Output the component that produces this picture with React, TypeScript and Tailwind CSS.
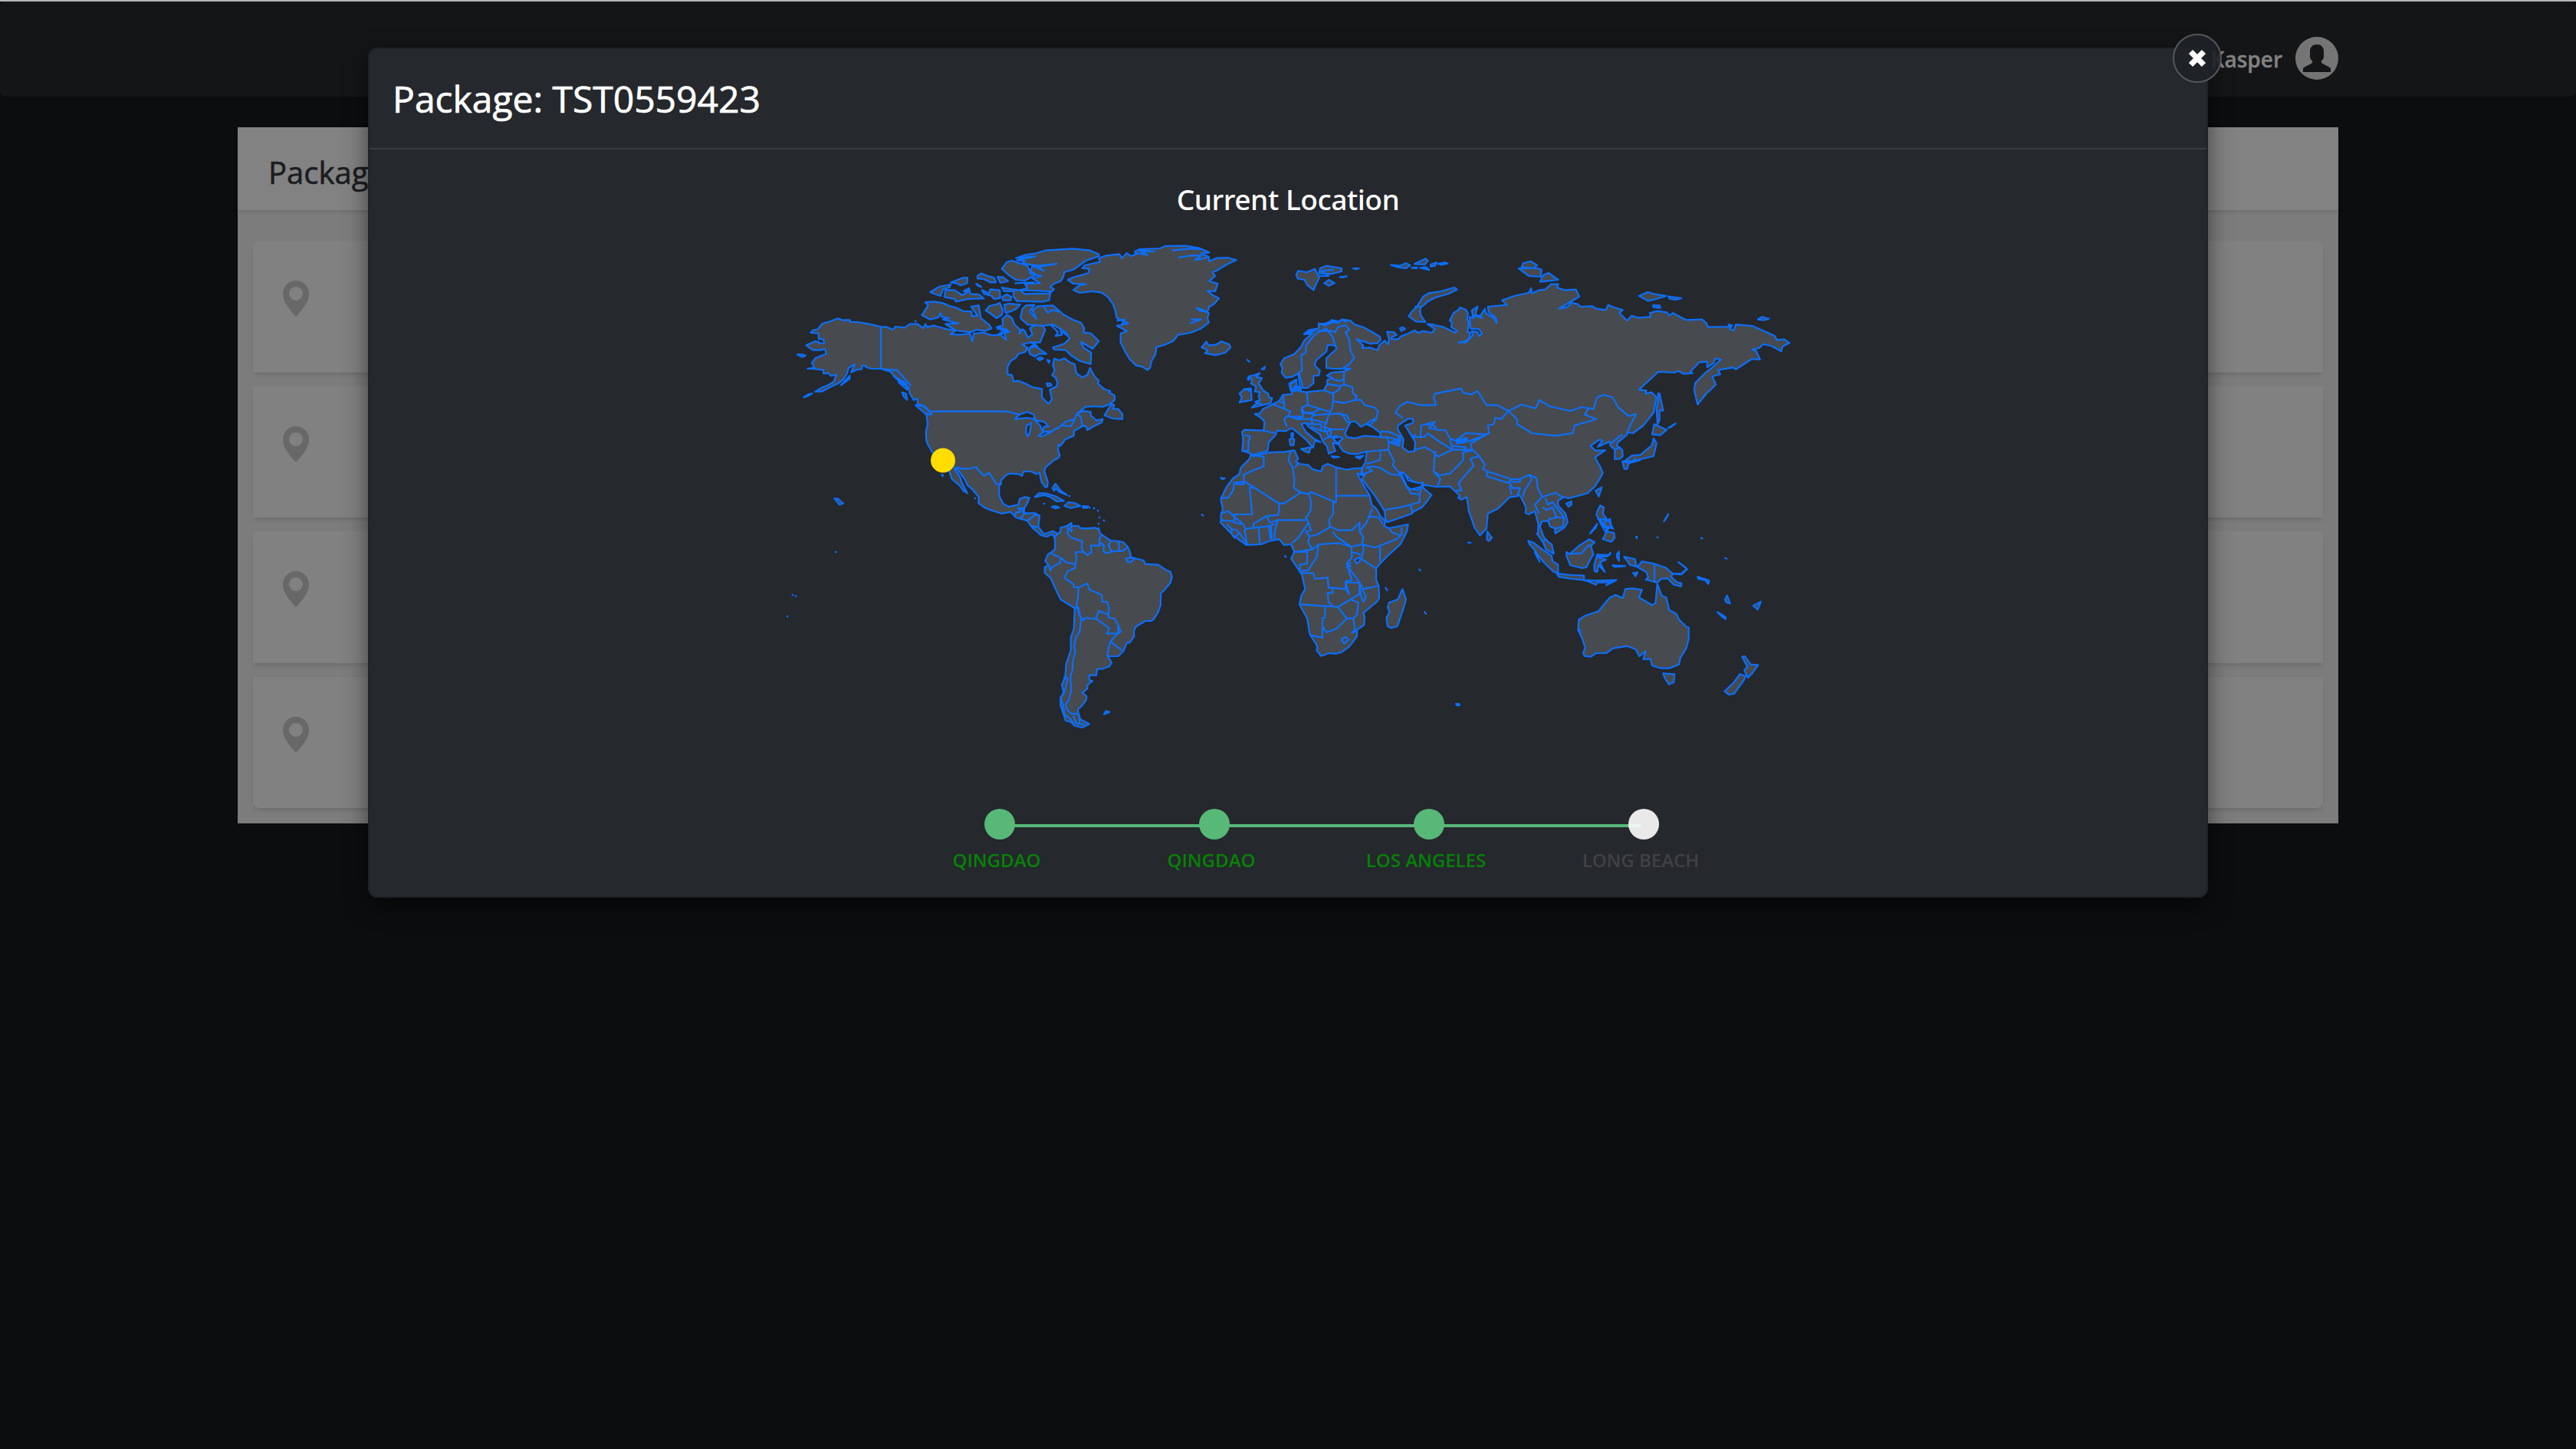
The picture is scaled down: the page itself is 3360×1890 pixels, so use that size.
import React from "react";

/* ---------- World map ---------- */

// Each section of the map is digitised on its own local grid: [originX, originY, unitsPerX, unitsPerY].
type Grid = [number, number, number, number];
const NA: Grid = [1000, 300, 3, 3];
const AT: Grid = [1300, 300, 3, 3];
const SA: Grid = [1300, 620, 3, 3];
const EU: Grid = [1560, 380, 3, 3];
const AS: Grid = [1780, 300, 2.6133, 3];
const OC: Grid = [2000, 520, 3, 3];

type Piece = [Grid, string];

function points([ox, oy, sx, sy]: Grid, coords: string): string {
  const n = coords.trim().split(/\s+/).map(Number);
  const out: string[] = [];
  for (let i = 0; i + 1 < n.length; i += 2) {
    out.push(`${(ox + n[i] / sx).toFixed(1)} ${(oy + n[i + 1] / sy).toFixed(1)}`);
  }
  return out.join("L");
}

const ring = (...pieces: Piece[]) => "M" + pieces.map(([g, c]) => points(g, c)).join("L") + "Z";
const rings = (g: Grid, list: string[]) => list.map((c) => ring([g, c])).join("");
const lines = (g: Grid, list: string[]) => list.map((c) => "M" + points(g, c)).join("");

const northAmerica = ring([
  NA,
  `447 543 412 543 390 538 388 531 372 532 372 545 355 546 330 557 345 525 320 540 315 560 300 585 280 600 255 612 215 632 190 633 215 617 240 607 262 595 273 566 252 571 240 560 222 562 222 548 180 543 160 543 187 538 176 520 190 502 212 493 233 485 228 464 214 470 180 470 155 451 190 435 203 438 205 443 225 442 222 427 203 427 203 405 172 402 180 393 200 388 218 366 250 357 278 346 298 353 325 352 328 360 355 360 400 368 447 378 470 380 495 390 503 378 540 382 560 368 590 368 612 384 622 368 627 380 655 374 705 388 740 393 720 408 760 410 795 405 805 436 810 405 850 402 880 412 915 410 937 430 930 400 950 398 925 385 900 380 925 372 922 348 942 332 960 345 970 370 990 388 990 405 1000 388 1010 395 1022 422 1040 408 1030 385 1050 372 1080 375 1090 390 1082 410 1070 440 1030 440 1000 448 1022 462 1010 478 985 485 975 500 955 512 943 535 943 565 960 568 967 593 985 590 1010 600 1040 615 1077 622 1077 655 1103 680 1116 662 1108 625 1135 612 1138 595 1130 578 1117 568 1127 550 1120 530 1125 503 1145 510 1165 502 1190 520 1205 525 1212 560 1235 577 1255 567 1265 540 1285 575 1300 590 1295 600 1320 622 1345 630 1340 636 1362 648 1362 665 1345 680 1315 692 1280 690 1248 692 1215 718 1240 708 1268 712 1268 725 1290 745 1315 740 1312 752 1280 768 1255 783 1250 770 1240 765 1202 787 1202 805 1168 820 1150 845 1142 840 1140 860 1147 883 1140 893 1125 900 1090 930 1087 945 1100 985 1098 1005 1090 1006 1075 985 1068 950 1055 955 1035 945 1005 945 1000 962 985 955 950 953 935 960 917 980 917 995 910 1000 910 1040 925 1070 945 1083 985 1075 990 1052 1010 1045 1028 1048 1020 1070 1008 1088 1008 1108 1050 1108 1068 1118 1063 1162 1085 1190 1120 1178 1150 1195 1130 1215 1120 1190 1095 1200 1075 1195 1040 1165 1020 1138 975 1125 955 1103 920 1110 880 1097 850 1085 828 1068 830 1045 805 1015 785 998 775 975 745 935 735 935 755 965 765 990 785 1030 770 1020 755 1000 725 975 715 945 690 920 660 890 645 865 632 842 625 825 623 790 630 760 625 722 645 720 620 690 590 680 590 660 575 665 560 640 555 615 530 600 505 580 485 555`,
]);

const canadianIslands = rings(NA, [
  "607 333 632 295 620 283 655 280 690 286 715 297 745 305 770 318 800 318 805 338 825 335 800 300 830 295 838 345 870 370 880 385 855 395 820 390 800 400 740 393 700 368 750 365 690 350 715 345 685 340 680 325 672 342 640 350",
  "640 243 675 222 720 213 715 225 690 232 680 258 655 250",
  "700 235 735 235 765 255 790 240 770 240 792 228 797 250 830 252 850 268 790 270 740 280 735 270 695 262",
  "722 205 765 188 785 186 785 208 760 217 740 208 720 205",
  "825 180 840 170 865 180 890 187 897 205 875 205 850 192 825 190",
  "820 210 840 223 828 220",
  "842 235 870 248 875 232 912 236 914 266 890 270 880 258 850 250",
  "903 183 925 185 945 200 915 207",
  "857 315 870 298 900 290 912 285 925 315 920 332 900 345 880 330",
  "930 292 950 288 992 292 975 310 950 320 935 325",
  "922 262 940 252 957 262 955 275 925 275",
  "920 152 940 125 960 120 990 130 1020 140 1030 160 1055 175 1010 198 975 195 945 175",
  "975 110 1010 98 1050 92 1090 80 1140 77 1200 73 1265 80 1300 95 1300 102 1250 120 1200 155 1165 165 1160 185 1150 200 1125 210 1110 222 1125 232 1110 245 1105 275 1080 281 980 278 965 260 967 240 930 240 920 225 960 232 990 235 1020 228 1010 210 1070 208 1040 190 1075 180 1030 170 1040 140 1085 160 1060 145 1135 132 1060 140 1000 130 1010 122 980 118 1050 103",
  "993 345 1000 310 1015 295 1048 293 1030 320 1055 348 1040 315 1060 298 1120 295 1140 312 1160 330 1200 352 1230 362 1243 385 1240 400 1270 405 1300 435 1275 465 1230 438 1240 460 1270 480 1268 525 1225 512 1190 490 1170 470 1125 468 1120 460 1165 445 1185 425 1170 400 1120 370 1080 375 1020 370",
  "1025 470 1045 450 1095 485 1065 485 1050 495 1030 485",
  "1058 503 1070 497 1082 503 1068 510",
  "1098 508 1108 512 1104 520",
  "1095 600 1110 600 1115 608 1100 612",
  "1322 725 1350 680 1360 685 1355 700 1375 700 1392 720 1392 740 1355 738",
  "120 487 140 487 152 492 138 497",
  "145 655 165 642 178 640 160 650",
  "290 608 325 570 325 582",
  "530 635 545 640 550 665 535 650",
  "582 685 610 688 640 712 645 722 620 718",
  "265 1050 280 1052 300 1070 285 1075",
  "1050 1045 1065 1030 1090 1030 1130 1042 1163 1060 1135 1062 1110 1045 1085 1038",
  "1115 1083 1130 1080 1145 1086 1130 1090",
  "1165 1080 1180 1065 1205 1068 1228 1080 1190 1088",
  "1237 1080 1258 1082 1255 1087 1237 1087",
  "1118 1010 1130 993 1150 1020 1175 1037 1145 1025 1130 1010 1125 1020",
  "685 957 690 960 688 964",
]);

const greenland = ring([
  AT,
  `278 195 300 185 360 168 362 152 335 150 345 138 405 125 400 110 430 100 480 94 490 110 510 90 525 102 545 95 540 85 560 75 640 72 660 63 740 62 790 70 832 88 800 92 830 105 832 122 860 110 905 108 938 118 900 135 860 160 845 165 855 180 832 200 865 210 855 240 825 238 845 255 870 267 850 290 832 300 825 320 780 305 830 325 825 345 830 362 800 385 760 402 710 410 690 435 655 450 625 458 622 485 605 515 600 540 590 548 570 535 545 530 520 505 505 480 485 440 485 405 510 395 470 375 515 365 470 345 465 320 455 290 435 262 410 245 375 240 325 246 300 235 325 215 350 212 300 210`,
]);

const atlantic = rings(AT, [
  "802 460 820 437 830 452 860 448 880 436 910 448 915 460 895 480 858 490 815 482 825 470 802 458",
  "1172 175 1180 160 1215 165 1245 152 1262 185 1240 235 1215 215 1205 195 1178 190",
  "1262 170 1265 150 1290 140 1350 150 1350 162 1310 172",
  "1282 208 1300 195 1322 208 1300 218",
  "1395 150 1418 150 1405 154",
  "1343 184 1370 181 1355 185",
  "985 575 1030 560 1015 575 1038 580 1025 600 1045 630 1062 640 1065 655 1078 658 1072 678 1030 688 998 695 1015 680 1035 680 1012 672 1030 665 1025 650 1030 635 1010 632 1015 612 995 600 1000 585",
  "950 675 960 655 950 640 970 622 995 620 998 665",
  "980 508 990 516",
  "1037 545 1050 535 1046 545",
  "1145 820 1155 814 1165 820 1162 842 1150 842",
  "1153 795 1160 795 1160 808 1153 808",
  "1192 857 1230 850 1222 872 1210 868",
  "1310 885 1340 888 1320 891",
  "1405 888 1435 883 1420 895",
  "1150 605 1170 588 1175 610 1165 615 1170 630 1150 628",
  "1175 625 1190 615 1190 632",
  "877 970 893 972 885 975",
  "803 1113 808 1118",
]);

const southAmerica = ring([
  SA,
  `230 238 250 220 250 205 275 198 293 186 292 198 320 198 325 206 350 208 385 205 400 212 405 228 445 255 480 258 495 262 512 278 522 300 525 320 575 333 582 347 632 350 665 372 680 377 686 398 680 420 655 450 642 462 642 505 632 535 615 562 605 570 582 570 545 592 537 608 538 630 520 655 510 655 495 690 475 708 435 708 450 733 440 748 415 757 393 758 390 783 362 782 362 800 375 805 355 820 355 835 335 850 352 865 350 880 330 905 318 915 320 935 328 955 362 973 335 987 305 980 290 965 270 960 262 935 250 900 250 870 262 850 255 820 268 790 272 738 290 685 290 635 302 600 305 520 250 485 240 465 210 400 188 382 188 360 203 350 190 335 200 310 228 290 228 245`,
]);

const southIslands = rings(SA, ["420 935 428 922 442 926", "505 325 525 322 540 325 525 340 512 338"]);

const eurasia = ring(
  [
    EU,
    `403 320 375 335 350 338 335 318 338 300 330 285 345 262 385 245 410 218 425 190 455 165 422 168 440 152 480 145 480 125 500 130 530 115 555 125 570 110 605 115 620 130 655 140 690 160 720 178 722 190 710 203 680 205 628 187 655 212 650 222 680 220 710 230 718 210 738 193 752 207 755 190 748 158 775 160 785 170 765 180 765 187 792 187 800 177 830 165 855 153 870 162 890 155 922 162 935 148 905 128 930 130`,
  ],
  [
    AS,
    `235 372 270 380 308 402 315 395 295 380 298 360 290 355 303 325 320 313 325 303 345 312 352 325 350 350 355 365 350 398 360 402 355 425 345 435 320 440 345 440 368 412 365 395 385 400 390 415 400 405 390 388 360 385 358 340 370 345 365 315 385 300 378 330 402 345 370 335 395 335 410 308 412 325 440 345 450 365 448 345 422 320 420 300 485 293 468 275 510 258 560 245 567 228 570 248 595 235 615 233 635 212 660 212 655 225 680 235 720 233 732 260 705 278 662 308 690 302 705 285 727 290 735 300 775 298 790 308 822 313 830 293 850 303 880 313 868 325 895 355 910 335 930 343 975 340 972 325 995 317 1030 322 1038 335 1050 325 1095 352 1150 350 1165 365 1170 380 1245 378 1240 370 1252 373 1245 388 1258 393 1265 370 1320 375 1370 400 1398 415 1405 430 1430 428 1448 442 1425 455 1420 475 1385 453 1358 447 1345 462 1322 468 1335 475 1348 507 1320 505 1265 545 1255 538 1205 548 1212 565 1185 573 1197 605 1165 640 1145 668 1135 683 1123 625 1127 598 1160 560 1185 538 1215 507 1195 503 1190 520 1168 537 1167 515 1140 518 1110 555 1118 560 1087 563 1070 552 1055 558 1000 555 982 575 935 625 960 628 958 640 978 635 995 655 985 715 950 765 915 795 895 792 895 800 862 832 860 845 878 860 880 885 870 895 852 897 853 860 838 845 835 828 795 848 810 825 800 820 770 845 787 863 820 862 785 890 800 920 812 950 803 970 785 1003 760 1030 735 1038 695 1050 680 1045 658 1060 660 1080 685 1110 692 1145 680 1165 650 1187 648 1168 632 1160 625 1138 605 1140 597 1160 612 1205 630 1225`,
  ],
  [OC, "72 570 80 607 50 590 38 562 14 528"],
  [
    AS,
    `590 1190 592 1150 580 1100 560 1112 548 1108 550 1085 535 1050 522 1030 520 1042 495 1045 455 1090 420 1110 415 1170 393 1195 375 1165 355 1100 348 1045 330 1055 318 1048 325 1040 290 1003 245 1005 200 997 165 985 130 948 118 950 125 965 145 1010 180 1018 198 988 200 1010 228 1037 210 1065 195 1085 165 1103`,
  ],
  [
    EU,
    `845 870 750 903 742 895 738 860 700 800 650 735 662 715 650 720 650 690 663 670 668 627 630 637 600 635 575 625 562 605 558 590 575 575 565 570 535 575 530 570 560 600 535 592 545 625 520 635 512 605 498 590 485 560 440 530 430 515 412 520 430 550 460 575 487 590 465 585 458 612 430 580 395 550 375 535 350 547 318 545 310 565 285 590 280 625 250 632 225 640 200 630 180 625 185 585 180 550 190 542 265 545 268 510 255 495 230 480 250 478 260 462 300 442 325 430 340 405 375 402 378 385 368 378 365 360 393 345 390 375 410 380 410 392 430 395 500 387 512 365 515 345 535 340 512 330 530 318 580 313 605 302 545 303 510 300 510 262 550 225 545 212 515 210 510 235 470 270 465 290 485 310 480 330 460 330 460 360 437 378 418 378 410 345`,
  ]
);

const africa = ring([
  EU,
  `215 638 225 645 290 630 345 628 385 622 400 655 390 665 405 675 440 680 455 695 490 705 495 685 515 675 545 688 590 698 615 693 650 692 645 718 630 712 665 775 680 800 688 835 705 850 722 880 742 900 735 918 755 927 830 912 825 940 800 990 750 1035 720 1065 705 1085 705 1130 715 1152 717 1200 708 1215 655 1258 660 1275 658 1305 630 1325 630 1350 600 1390 570 1412 545 1418 520 1416 490 1427 472 1405 475 1390 445 1340 435 1280 405 1225 412 1190 427 1165 415 1110 372 1045 385 1020 372 990 345 993 325 970 285 978 255 990 198 993 145 955 97 905 98 870 105 855 97 812 120 765 145 732 170 715 175 690 210 655`,
]);

const africanIslands = rings(EU, [
  "755 1218 790 1205 808 1165 822 1205 812 1240 788 1310 765 1318 750 1312 745 1278 757 1255 750 1235",
  "1140 940 1158 965 1145 977 1138 970",
  "895 1255 900 1262",
  "742 1160 748 1170",
  "1065 983 1075 984",
  "348 1035 352 1040",
  "873 1088 878 1093",
]);

const arctic = rings(AS, [
  "90 137 120 140 140 130 155 138 140 150 110 145",
  "170 133 208 112 215 120 205 135",
  "188 148 210 145 220 157",
  "225 135 245 127 240 140 225 143",
  "250 132 275 127 283 131 260 136",
  "160 148 178 146 178 150",
  "535 145 540 130 565 122 588 138 575 150",
  "525 150 590 150 603 155 600 183 560 180",
  "598 203 610 175 627 168 660 195 620 200",
  "935 258 965 243 985 250 1028 258 985 273 965 277",
  "1035 260 1080 267 1060 273 1040 270",
  "982 295 1005 295 1008 305 985 303",
  "1340 350 1355 340 1378 347 1360 353",
  "150 338 160 320 178 300 200 260 220 247 260 240 305 225 315 233 285 250 240 265 215 280 190 305 190 330 207 360 175 358",
  "120 385 130 380 138 387 125 395",
  "987 760 1030 782 1008 803 980 800",
  "1035 775 1060 757 1045 770",
  "1000 640 1005 640 1018 707 1005 705 1005 745 998 760 995 700 1000 670",
  "985 815 995 835 985 885 940 897 920 905 885 905 910 883 940 880 965 855 978 845",
  "878 905 900 910 895 935 885 935",
  "787 1020 808 1007 798 1043",
  "687 1070 705 1062 705 1075 695 1083",
  "793 1100 803 1078 815 1085 812 1110 825 1130 800 1135 790 1115",
  "795 1130 830 1135 845 1165 820 1165",
  "768 1188 792 1150 788 1165",
  "812 1210 825 1180 850 1185 852 1205 840 1220",
  "1020 1140 1035 1112 1028 1128",
]);

const oceania = rings(OC, [
  "178 865 205 848 255 832 285 795 300 778 322 768 350 780 360 745 385 742 425 748 413 778 465 808 478 800 485 725 503 772 520 778 532 827 560 842 570 865 600 893 608 895 608 940 598 978 575 1015 570 1040 532 1055 500 1055 465 1045 458 1018 430 1020 440 988 415 1008 400 980 368 968 312 977 285 996 245 996 225 1010 200 1007 195 995 203 975 190 935 175 905",
  "508 1075 552 1078 550 1110 530 1118 515 1095",
  "817 1010 828 1008 850 1040 880 1042 860 1070 840 1092 825 1062 838 1050",
  "748 1145 785 1110 808 1078 830 1085 825 1100 785 1155 765 1158",
  "408 658 425 637 470 645 520 662 545 685 540 698 562 718 580 722 578 735 550 728 525 703 500 705 485 720 440 708 450 700 442 678 405 658 378 650 355 618 398 628 402 650",
  "550 685 580 685 600 665 568 640 595 660 602 667 580 688",
  "-20 556 0 563 35 590 72 615 75 635 97 650 97 682 80 678 45 645 20 615 5 592 -15 570",
  "92 685 150 690 198 692 198 710 150 705 100 697",
  "205 710 240 712 325 710 285 730 305 718 250 720 245 728",
  "130 600 142 608 180 575 218 550 240 562 225 575 235 610 225 625 208 660 190 663 145 652 130 615",
  "238 650 250 610 298 612 302 602 290 617 250 620 285 630 260 640 280 678 255 650 250 678 240 675",
  "327 608 335 598 335 635 327 620",
  "310 652 360 655 318 658",
  "390 682 408 680 400 695",
  "643 697 670 705 688 712 685 725 672 710 645 705",
  "750 785 758 770 770 802 755 797",
  "720 835 752 855 752 863 735 850",
  "860 810 890 795 878 825",
  "5 600 25 638 15 620",
  "402 540 406 541 404 546",
  "656 545 661 547",
  "750 624 757 626",
]);

const water =
  ring([
    EU,
    "583 555 605 510 625 510 645 530 665 520 690 530 722 555 720 570 660 565 620 575 590 570",
  ]) +
  ring([EU, "668 518 695 500 705 500 680 522"]) +
  ring([EU, "790 525 830 498 850 500 848 515 818 525 840 560 858 590 855 625 830 628 808 610 812 580 790 540"]) +
  ring([EU, "802 710 815 712 830 740 870 750 888 748 880 765 840 775 825 762"]) +
  ring([EU, "622 1050 640 1040 642 1055 628 1065"]) +
  ring([NA, "970 740 990 722 1020 712 1045 722 1050 740 1020 735"]) +
  ring([NA, "1017 765 1035 755 1030 790 1022 808 1015 795"]) +
  ring([NA, "1050 745 1085 750 1103 768 1085 770 1080 788 1070 765"]) +
  ring([NA, "1063 805 1085 790 1115 788 1135 775 1110 792 1075 808"]) +
  ring([NA, "990 235 1110 240 1105 248 1010 250"]);

const borders =
  lines(NA, [
    "447 378 447 543",
    "640 710 940 710 970 718 990 722",
    "1050 740 1060 750",
    "1135 780 1170 750 1205 740 1215 718 1230 735 1235 765",
    "1150 765 1190 768 1205 745",
    "735 928 770 935 800 933 820 928 838 950 852 962 870 950 900 995 917 995",
    "972 1120 975 1105 992 1103 988 1088 1010 1090",
    "992 1130 1010 1110",
    "1020 1138 1050 1115 1068 1118",
    "1038 1160 1063 1162",
    "447 543 490 548 510 548 565 610",
    "495 570 545 600 550 625 515 595 535 590",
    "1010 215 1045 205 970 208",
    "900 385 945 400 905 410 940 385",
    "1035 440 1060 455 1030 460 1055 440",
    "1085 300 1100 325 1115 312 1145 320",
    "1110 370 1140 400 1130 415 1155 410 1150 395 1180 415",
  ]) +
  lines(AT, [
    "545 90 590 98 560 80 620 84",
    "685 80 760 73 800 75",
    "710 108 760 100 800 100 775 118 825 108",
    "755 365 800 350 760 350",
    "470 355 500 350 490 370 515 365",
    "790 315 820 320 790 305",
    "1262 180 1300 180 1270 160 1320 155",
  ]) +
  lines(SA, [
    "80 130 100 132 105 150",
    "278 200 278 230 290 243 310 250 335 257 332 285 340 300 310 300 312 330 305 360",
    "293 200 285 212 292 220 297 210",
    "340 300 355 312 372 300 368 275 405 275 400 255 408 235",
    "405 262 420 275 418 298 430 305 450 298",
    "445 257 438 275 450 298 495 295 512 280",
    "477 260 480 295",
    "213 305 245 320 275 342 305 347 308 362 278 375 265 402 300 425 302 438 320 438",
    "250 320 248 342 215 360 210 373 203 350",
    "320 438 355 423 362 447 410 467 413 495 432 495 440 520 437 545 400 530 388 560 440 598 432 620 475 618 475 585 462 562 437 555 437 535",
    "320 438 318 480 312 510 325 550 338 568 345 558 388 562",
    "305 520 318 515 330 560 325 610 310 635 303 670 308 690 297 730 297 760 288 790 292 840 282 880 270 895 275 915 290 932 322 935 325 970",
    "475 618 445 650 432 705",
    "445 650 490 685",
    "475 585 485 612 465 625",
    "262 790 278 795 265 850 250 870 260 900 265 935 290 955 305 980",
    "300 940 310 970 345 975",
  ]) +
  lines(EU, [
    "408 380 400 320 415 310 412 250 430 240 430 215 455 180 480 155 530 155 545 160 555 140 585 132 600 150 585 160 600 190 605 235 620 260 600 285 575 300",
    "545 212 535 180 510 145 480 160",
    "580 313 578 345 560 350 535 345",
    "578 345 580 365 612 375 615 400 630 410 620 425 645 425 660 445 700 455 712 470 705 500",
    "510 362 560 370 580 365",
    "500 387 535 400 560 385 565 370",
    "537 430 580 437 620 425",
    "537 400 537 430 530 465 520 475",
    "435 395 437 445 470 455 520 470",
    "412 455 437 445",
    "412 455 425 475 460 475 485 460",
    "340 405 345 440 345 460 370 470 360 490 395 490 420 490 412 460",
    "300 442 345 460",
    "325 430 350 440",
    "345 500 360 487 395 500 415 490",
    "345 500 355 530",
    "395 500 420 500 450 500 460 480 420 475",
    "450 500 510 515 520 480 460 485",
    "510 515 500 530 530 540 580 540",
    "520 480 570 478 590 510 600 515",
    "560 480 590 485 600 505",
    "450 505 460 520 430 518",
    "460 520 490 520 490 545 450 530",
    "490 545 510 550 520 570 500 580",
    "500 530 510 550 530 540 525 570 555 565",
    "190 562 212 568 205 590 205 622 187 625",
    "265 545 310 555",
    "370 385 395 375",
    "722 548 755 550 800 570 790 580 745 570 720 572",
    "745 570 755 590 795 605 800 570",
    "755 590 752 620 775 665 770 680 795 710",
    "668 627 752 620",
    "668 675 720 660 722 630",
    "663 690 690 685 720 690 760 715 800 720",
    "655 715 690 703 672 690",
    "795 595 790 580 775 598",
    "740 855 800 845 840 835 875 825 875 795 840 790 830 770",
    "838 835 850 868",
    "875 795 882 765",
    "215 640 265 648 265 685 225 700 187 718 187 745 150 748 145 780 125 808 97 808",
    "155 755 187 755 187 742",
    "187 742 325 830 325 860 322 875 275 880 225 910 225 925 195 930 185 912 150 905 150 873 220 873 210 768 230 770",
    "325 830 345 830 410 787 440 793 450 785 545 825",
    "370 628 362 660 378 690 385 735 383 770 410 787",
    "385 690 400 675",
    "548 690 548 825 537 825 537 870 520 895 525 922 475 952 440 960",
    "548 800 675 800",
    "440 793 450 820 448 860 430 885 440 905 400 965 375 985",
    "320 895 430 895",
    "275 880 290 905 320 895 308 940 308 970",
    "225 925 280 920 310 910",
    "245 925 250 990",
    "285 922 292 970",
    "293 918 298 970",
    "98 870 125 860 148 880 185 912",
    "98 895 150 900",
    "120 910 140 930 160 935 170 945 150 965 138 945 140 930",
    "170 945 200 990 190 930",
    "440 905 450 935 430 940 445 960 438 980 455 1010 385 1020",
    "455 1010 480 990 560 985 608 1000 610 1040 590 1065 600 1100 610 1130 585 1135 585 1165",
    "525 922 560 935 610 935 640 905 640 940 655 960 650 990 608 1000 550 960 535 940",
    "640 940 670 900 690 850",
    "672 880 715 885 730 910",
    "650 990 700 1003 720 995 785 970 805 950 805 925",
    "755 930 770 945 800 955",
    "720 995 720 1055",
    "655 990 655 1020 645 1045 705 1085",
    "610 1020 645 1030",
    "480 990 472 1040 440 1090 410 1095",
    "385 1020 435 1020 435 1065 405 1070 408 1090",
    "410 1103 460 1103 465 1125 515 1120 518 1160 535 1160 535 1180 515 1180 518 1215 535 1230",
    "535 1160 585 1165 600 1185 585 1140 640 1140 640 1185 605 1205 555 1235 410 1225",
    "600 1085 640 1140 655 1165 715 1152",
    "640 1140 645 1190 655 1215 665 1195 650 1165",
    "605 1205 635 1218 630 1265 615 1280 590 1280 555 1235",
    "505 1235 505 1278 495 1278 495 1355 445 1345",
    "495 1310 510 1335 550 1320 590 1280",
    "615 1280 622 1325 610 1335 630 1330",
    "568 1363 585 1352 597 1363 580 1378 568 1363",
    "605 1060 590 1080 610 1075",
    "422 165 460 155 440 165 470 150",
    "485 128 520 125 500 135 540 120 530 112 560 118 575 112 590 122",
    "375 378 395 388 408 375 385 370",
    "200 345 212 330 205 350",
    "190 385 215 382 205 392",
  ]) +
  lines(AS, [
    "130 735 105 715 118 690 145 672 188 685 243 685 235 655 240 640 330 620 335 637 365 643 385 630 415 685 450 685 490 708 465 740 445 735 440 760 420 765 425 795 410 803",
    "490 708 535 683 583 698 595 665 630 690 700 708 740 693 780 700 793 655 815 645 845 655 865 695 900 728 925 720 905 765 895 790",
    "490 708 520 740 520 760 570 795 650 805 710 795 715 765 790 740 750 722 762 700",
    "190 810 192 765 240 750 220 775 255 783 275 783 290 815 310 825 345 795 420 800",
    "205 760 235 765 245 775",
    "310 825 350 820 315 835 345 830 410 803",
    "170 810 205 810 215 795 250 825 300 860 365 860 362 835 410 803",
    "300 855 290 820",
    "170 860 205 850 230 865 250 887 280 870 300 860",
    "240 865 235 945 255 960 290 953 320 920 335 900 335 870 370 862 390 885 360 895 372 922 350 950 320 990 330 1020 310 1020",
    "235 945 258 975 248 1003",
    "390 885 410 918 403 935 420 945 415 963 490 990 500 975 420 945",
    "500 975 530 975 560 958 585 970 590 1010 605 1045 580 1075 595 1110",
    "500 985 530 985 530 975",
    "495 1000 500 1035",
    "495 990 505 1010 530 1010 520 1040",
    "560 958 570 975 545 1020 540 1045",
    "605 1045 650 1028 675 1045",
    "615 1050 625 1075 640 1065 680 1125 675 1160 645 1170",
    "605 1085 620 1095 640 1085 655 1125 630 1130 625 1140",
    "655 1125 680 1125",
    "840 835 865 810 880 800",
    "853 860 872 850",
    "175 800 165 805 172 815",
    "170 300 190 300",
    "105 820 90 830 105 840 125 820",
    "340 865 345 850 300 845",
    "310 830 345 815 320 822 350 812",
    "800 1140 820 1180 830 1160 850 1170",
    "895 910 930 903",
  ]) +
  lines(OC, [
    "474 646 474 718",
    "142 608 190 605 205 585 220 572",
    "38 560 50 548",
    "255 470 290 505 270 490 300 470 305 500 280 520",
    "178 900 185 915",
    "375 255 400 235 385 250 420 240",
    "200 712 225 715",
  ]);

const specks: [number, number][] = [
  [1090, 720], [1034, 776], [1038, 777.5], [1027, 804], [1194, 419], [1362, 657],
  [1395, 647], [1427, 663], [1432, 666], [1434, 675], [1433, 683], [1440, 679], [1433, 689], [1272, 650], [1421, 662],
  [2162, 701],
];

function WorldMap() {
  return (
    <svg viewBox="1000 300 1360 660" className="mx-auto block h-[660px] w-[1360px]" aria-label="World map">
      <g fill="#474a4e" stroke="#0b6ffd" strokeWidth="2.2" strokeLinejoin="round">
        <path d={northAmerica} />
        <path d={canadianIslands} />
        <path d={greenland} />
        <path d={southAmerica + southIslands} />
        <path d={eurasia} />
        <path d={atlantic} />
        <path d={africa + africanIslands} />
        <path d={arctic} />
        <path d={oceania} />
        <path d={borders} fill="none" />
        <path d={water} fill="#25282d" />
        <path d="M1899 918l4 0 1 2-4 0z" />
      </g>
      {specks.map(([x, y]) => (
        <rect key={`${x}-${y}`} x={x - 1.2} y={y - 1.2} width="2.4" height="2.4" fill="#0b6ffd" />
      ))}
      <circle cx="1230" cy="600.5" r="16" fill="#ffdd00" />
    </svg>
  );
}

/* ---------- Icons ---------- */

function PinIcon() {
  return (
    <svg viewBox="0 0 34 47" className="h-[47px] w-[34px] fill-[#686868]" fillRule="evenodd">
      <path d="M17 0A17 17 0 0 1 34 17.200C34 27.500 26.500 36.500 17 47C7.500 36.500 0 27.500 0 17.200A17 17 0 0 1 17 0ZM17 8A9 9 0 1 0 17 26A9 9 0 1 0 17 8Z" />
    </svg>
  );
}

function Avatar() {
  return (
    <svg viewBox="0 0 168 168" className="h-14 w-14">
      <circle cx="84" cy="84" r="84" fill="#757575" />
      <path
        d="M84 30c-16 0-27 10-27 27v20c0 8 4 12 8 16 3 3 2 8-2 11-10 6-25 11-33 19v15h108v-15c-8-8-23-13-33-19-4-3-5-8-2-11 4-4 8-8 8-16V57c0-17-11-27-27-27z"
        fill="#141517"
      />
    </svg>
  );
}

function CloseIcon() {
  return (
    <svg viewBox="0 0 24 24" className="h-6 w-6">
      <path d="M3.500 3.500L20.500 20.500M20.500 3.500L3.500 20.500" stroke="#fff" strokeWidth="7.400" />
    </svg>
  );
}

/* ---------- Page ---------- */

const cardCorners = ["rounded-t-lg", "", "", "rounded-b-lg"];

const stops = [
  { name: "QINGDAO", done: true },
  { name: "QINGDAO", done: true },
  { name: "LOS ANGELES", done: true },
  { name: "LONG BEACH", done: false },
];

function TopBar() {
  return (
    <header className="flex h-[124px] items-start justify-end rounded-lg bg-[#141517] pt-[46px] pr-[310px]">
      <span className="mt-[10px] mr-[17px] text-[28px] leading-[38px] font-semibold text-[#828282] [-webkit-text-stroke:0.4px_#828282]">
        Kasper
      </span>
      <Avatar />
    </header>
  );
}

function PackageList() {
  return (
    <section className="mx-auto mt-10 flex h-[908px] w-[2740px] flex-col bg-[#7c7c7c]">
      <h2 className="h-[108px] bg-[#828282] pt-[31px] pl-10 text-[40px] leading-[56px] text-[#1b1d1f] shadow-[0_2px_6px_rgba(0,0,0,0.12)] [-webkit-text-stroke:0.6px_#1b1d1f]">
        Packages
      </h2>
      <div className="flex flex-1 flex-col gap-[18px] px-5 pt-10 pb-5">
        {cardCorners.map((corner, i) => (
          <div
            key={i}
            className={`flex flex-1 items-start bg-[#818181] pt-[52px] pl-[39px] shadow-[0_4px_6px_-2px_rgba(0,0,0,0.15)] ${corner}`}
          >
            <PinIcon />
          </div>
        ))}
      </div>
    </section>
  );
}

function Progress() {
  return (
    <div className="relative mx-auto w-[1120px] translate-x-10">
      <ol className="grid grid-cols-4">
        {stops.map((stop, i) => (
          <li key={i} className="flex flex-col items-center">
            <span
              className={`ml-2 h-10 w-10 rounded-full ${stop.done ? "bg-[#57b878]" : "bg-[#e9e9e9]"}`}
            />
            <span
              className={`mt-[10px] text-[24px] leading-[34px] font-semibold whitespace-nowrap ${
                stop.done ? "text-[#058205]" : "text-[#404144]"
              }`}
            >
              {stop.name}
            </span>
          </li>
        ))}
      </ol>
      <div className="absolute top-[20px] right-[140px] left-[144px] flex h-1">
        <div className="flex-1 bg-[#57b878]" />
        <div className="w-4 bg-[#edf7f1]" />
      </div>
    </div>
  );
}

function PackageDialog() {
  return (
    <div
      role="dialog"
      className="absolute top-[62px] left-[480px] h-[1109px] w-[2400px] rounded-xl border-2 border-[#1f2226] bg-[#25282d] shadow-[0_10px_30px_rgba(0,0,0,0.5)]"
    >
      <h1 className="h-[131px] border-b-2 border-[#383b40] pt-[32px] pl-[30px] text-[48px] leading-[66px] text-white [-webkit-text-stroke:0.7px_#fff]">
        Package: TST0559423
      </h1>
      <h2 className="pt-[38px] text-center font-['Noto_Sans',sans-serif] text-[37px] leading-[54px] font-medium tracking-[-0.4px] text-white">
        Current Location
      </h2>
      <div className="mt-[13px]">
        <WorldMap />
      </div>
      <div className="mt-[95px]">
        <Progress />
      </div>
      <button className="absolute -top-[20px] right-[-20px] flex h-16 w-16 items-center justify-center rounded-full border-2 border-[#54575b] bg-[#1f2227]/90">
        <CloseIcon />
      </button>
    </div>
  );
}

export default function App() {
  return (
    <main className="relative h-[1890px] w-[3360px] overflow-hidden bg-[#0b0d0e] font-['Open_Sans',sans-serif]">
      <div className="h-0.5 bg-[#b4b6b8]" />
      <TopBar />
      <PackageList />
      <PackageDialog />
    </main>
  );
}
